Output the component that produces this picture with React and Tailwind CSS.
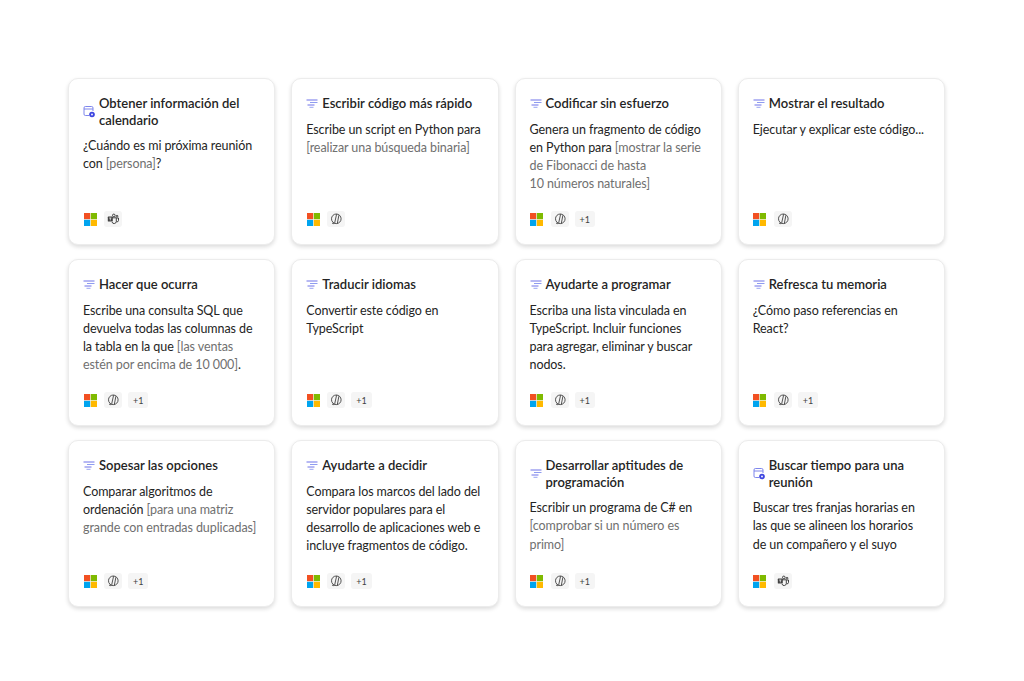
const Ms = () => (
  <svg width="13" height="13" viewBox="0 0 13 13" className="shrink-0">
    <rect x="0" y="0" width="6.2" height="6.2" fill="#f25022" />
    <rect x="6.8" y="0" width="6.2" height="6.2" fill="#7fba00" />
    <rect x="0" y="6.8" width="6.2" height="6.2" fill="#00a4ef" />
    <rect x="6.8" y="6.8" width="6.2" height="6.2" fill="#ffb900" />
  </svg>
);

const Chip = ({ children }) => (
  <div className="flex h-[16px] min-w-[18px] items-center justify-center rounded-[3px] bg-[#f5f5f5]">
    {children}
  </div>
);

const Copilot = () => (
  <svg width="12" height="12" viewBox="0 0 12 12" fill="none" stroke="#424242" strokeWidth="0.9">
    <circle cx="6.300" cy="5.800" r="4.800" />
    <path d="M6.600 1.200 4.700 9.800c-.2.700-.7 1-1.400.8L2 10" />
    <path d="M7.300 10.500 8.900 2.200" />
  </svg>
);

const Teams = () => (
  <svg width="12" height="12" viewBox="0 0 12 12" fill="none" stroke="#424242" strokeWidth="1">
    <circle cx="6.800" cy="2.400" r="1.300" />
    <circle cx="10" cy="3.200" r="0.900" />
    <path d="M5 4.800h4.300v3.700a2.200 2.200 0 0 1-4.300.5" />
    <path d="M9.500 5h2v2.500a1.500 1.500 0 0 1-2 1.200" />
    <rect x="0.800" y="3.600" width="5" height="5" rx="0.600" fill="#424242" stroke="none" />
    <path d="M2.200 5h2.200M3.300 5v2.400" stroke="#fff" strokeWidth="0.700" />
  </svg>
);

const Lines = () => (
  <svg width="12" height="9" viewBox="0 0 12 9" fill="none" stroke="#6f72e8" strokeWidth="1" className="shrink-0">
    <path d="M0.500 1h11" />
    <path d="M4 3.500h7.500" stroke="#8f9cf0" />
    <path d="M1.500 6h7" />
    <path d="M3.500 8.300h4" stroke="#9aa6f2" />
  </svg>
);

const Cal = () => (
  <svg width="12" height="13" viewBox="0 0 12 13" fill="none" className="shrink-0">
    <path d="M6 10.500H2.400A1.400 1.400 0 0 1 1 9.100V2.900a1.400 1.400 0 0 1 1.400-1.400h6.200A1.400 1.400 0 0 1 10 2.900V6" stroke="#6f78ea" strokeWidth="0.900" />
    <path d="M1 4h9" stroke="#6f78ea" strokeWidth="0.900" />
    <circle cx="9" cy="9.500" r="2.800" fill="#3d45e0" />
    <circle cx="9" cy="9.500" r="0.900" fill="#fff" />
  </svg>
);

const M = ({ children }) => <span className="text-[#707070]">{children}</span>;

const cards = [
  { icon: "cal", title: "Obtener información del calendario", body: <>¿Cuándo es mi próxima reunión con <M>[persona]</M>?</>, app: "teams" },
  { title: "Escribir código más rápido", body: <>Escribe un script en Python para <M>[realizar una búsqueda binaria]</M></>, app: "copilot" },
  { title: "Codificar sin esfuerzo", body: <>Genera un fragmento de código en Python para <M>[mostrar la serie de Fibonacci de hasta 10&nbsp;números naturales]</M></>, app: "copilot", more: true },
  { title: "Mostrar el resultado", body: "Ejecutar y explicar este código...", app: "copilot" },
  { title: "Hacer que ocurra", body: <>Escribe una consulta SQL que devuelva todas las columnas de la tabla en la que <M>[las ventas estén por encima de 10&nbsp;000]</M>.</>, app: "copilot", more: true },
  { title: "Traducir idiomas", body: "Convertir este código en TypeScript", app: "copilot", more: true },
  { title: "Ayudarte a programar", body: "Escriba una lista vinculada en TypeScript. Incluir funciones para agregar, eliminar y buscar nodos.", app: "copilot", more: true },
  { title: "Refresca tu memoria", body: "¿Cómo paso referencias en React?", app: "copilot", more: true },
  { title: "Sopesar las opciones", body: <>Comparar algoritmos de ordenación <M>[para una matriz grande con entradas duplicadas]</M></>, app: "copilot", more: true },
  { title: "Ayudarte a decidir", body: "Compara los marcos del lado del servidor populares para el desarrollo de aplicaciones web e incluye fragmentos de código.", app: "copilot", more: true },
  { title: "Desarrollar aptitudes de programación", body: <>Escribir un programa de C# en <M>[comprobar si un número es primo]</M></>, app: "copilot", more: true },
  { icon: "cal", title: "Buscar tiempo para una reunión", body: "Buscar tres franjas horarias en las que se alineen los horarios de\u00a0un compañero y el suyo", app: "teams" },
];

const Card = ({ card }) => (
  <div className="flex h-[167px] flex-col rounded-[10px] border border-[#ececec] bg-white pt-[16px] pr-[14px] pb-[17px] pl-[14px] shadow-[0_2px_4px_rgba(0,0,0,0.14)]">
    <div className="flex items-center gap-[4px] text-[13px] leading-[16.5px] font-semibold text-[#242424]">
      {card.icon === "cal" ? <Cal /> : <Lines />}
      <div>{card.title}</div>
    </div>
    <div className="mt-[9px] text-[12.500px] leading-[18.300px] tracking-[-0.08px] text-[#242424]">{card.body}</div>
    <div className="mt-auto flex items-center gap-[7px]">
      <div className="flex h-[16px] w-[14px] items-center justify-center"><Ms /></div>
      <div className="flex items-center gap-[6px]">
        <Chip>{card.app === "teams" ? <Teams /> : <Copilot />}</Chip>
        {card.more && <Chip><span className="px-[5px] text-[9px] leading-none text-[#424242]">+1</span></Chip>}
      </div>
    </div>
  </div>
);

export default function App() {
  return (
    <div className="h-[681px] w-[1024px] bg-white pt-[78px] pl-[68px] font-['Lato','Open_Sans',sans-serif]">
      <div className="grid w-[877px] grid-cols-4 gap-x-[16px] gap-y-[14px]">
        {cards.map((card, i) => <Card key={i} card={card} />)}
      </div>
    </div>
  );
}
